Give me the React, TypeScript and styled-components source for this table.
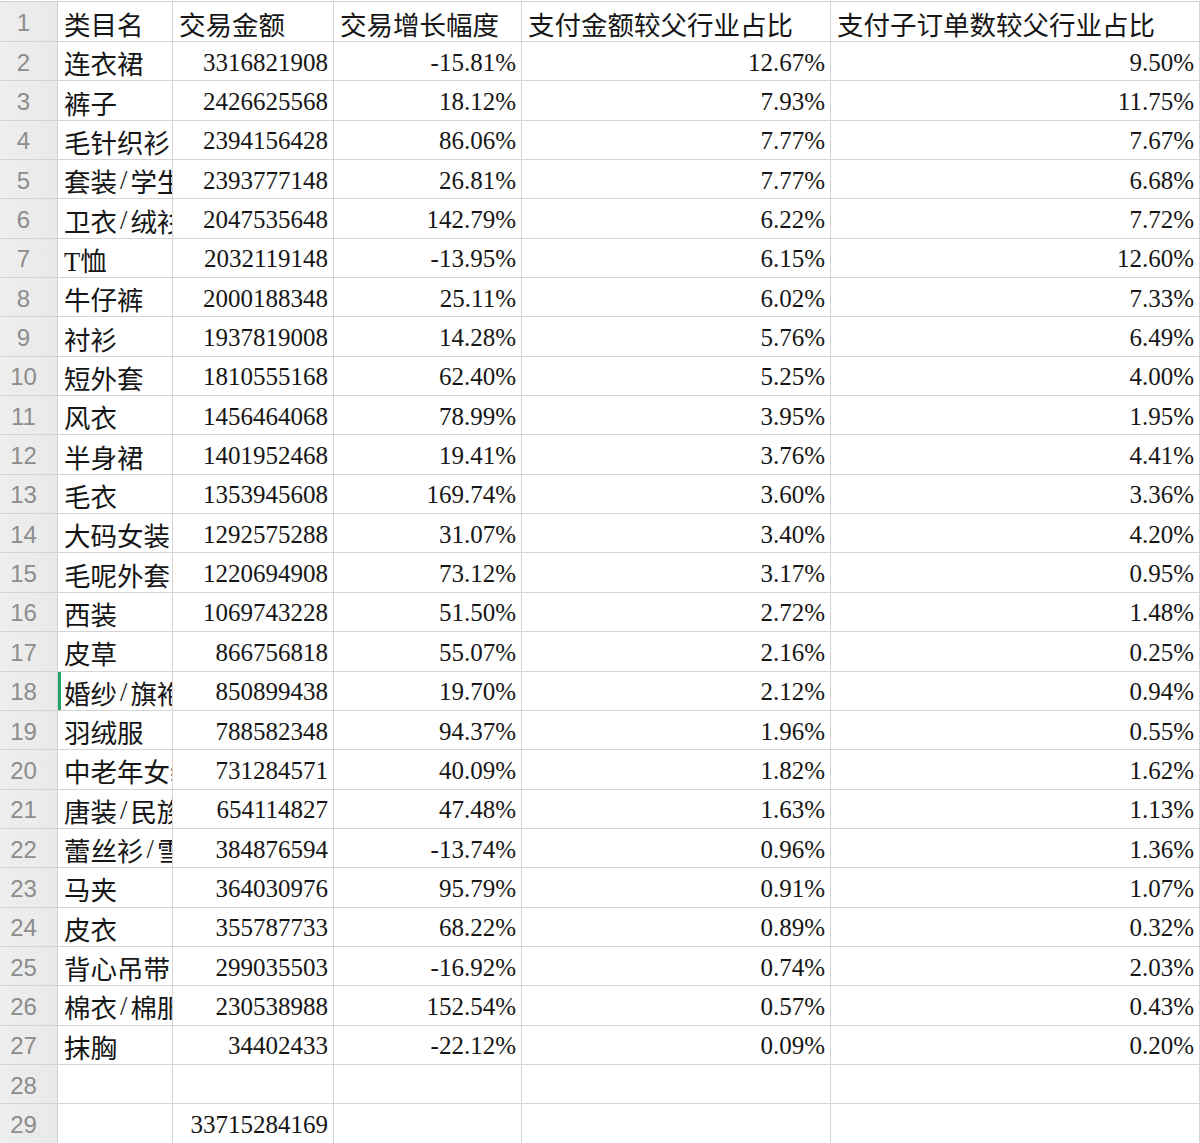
import React from 'react'
import styled, { createGlobalStyle, css } from 'styled-components'

const GlobalStyle = createGlobalStyle`
  html, body {
    margin: 0;
    padding: 0;
    background: #ffffff;
    overflow: hidden;
  }
`

const headers = ['类目名', '交易金额', '交易增长幅度', '支付金额较父行业占比', '支付子订单数较父行业占比']

const rows: [string, string, string, string, string][] = [
  ['连衣裙', '3316821908', '-15.81%', '12.67%', '9.50%'],
  ['裤子', '2426625568', '18.12%', '7.93%', '11.75%'],
  ['毛针织衫', '2394156428', '86.06%', '7.77%', '7.67%'],
  ['套装/学生校服', '2393777148', '26.81%', '7.77%', '6.68%'],
  ['卫衣/绒衫', '2047535648', '142.79%', '6.22%', '7.72%'],
  ['T恤', '2032119148', '-13.95%', '6.15%', '12.60%'],
  ['牛仔裤', '2000188348', '25.11%', '6.02%', '7.33%'],
  ['衬衫', '1937819008', '14.28%', '5.76%', '6.49%'],
  ['短外套', '1810555168', '62.40%', '5.25%', '4.00%'],
  ['风衣', '1456464068', '78.99%', '3.95%', '1.95%'],
  ['半身裙', '1401952468', '19.41%', '3.76%', '4.41%'],
  ['毛衣', '1353945608', '169.74%', '3.60%', '3.36%'],
  ['大码女装', '1292575288', '31.07%', '3.40%', '4.20%'],
  ['毛呢外套', '1220694908', '73.12%', '3.17%', '0.95%'],
  ['西装', '1069743228', '51.50%', '2.72%', '1.48%'],
  ['皮草', '866756818', '55.07%', '2.16%', '0.25%'],
  ['婚纱/旗袍/礼服', '850899438', '19.70%', '2.12%', '0.94%'],
  ['羽绒服', '788582348', '94.37%', '1.96%', '0.55%'],
  ['中老年女装', '731284571', '40.09%', '1.82%', '1.62%'],
  ['唐装/民族服装', '654114827', '47.48%', '1.63%', '1.13%'],
  ['蕾丝衫/雪纺衫', '384876594', '-13.74%', '0.96%', '1.36%'],
  ['马夹', '364030976', '95.79%', '0.91%', '1.07%'],
  ['皮衣', '355787733', '68.22%', '0.89%', '0.32%'],
  ['背心吊带', '299035503', '-16.92%', '0.74%', '2.03%'],
  ['棉衣/棉服', '230538988', '152.54%', '0.57%', '0.43%'],
  ['抹胸', '34402433', '-22.12%', '0.09%', '0.20%'],
]

const Sheet = styled.div`
  display: grid;
  grid-template-columns: 58px 115px 161px 188px 309px 369px;
  grid-template-rows: 40px repeat(28, 39.35px);
  border-top: 1px solid #d2d2d2;
  margin-top: 1px;
  width: 1200px;
  font-family: 'Liberation Serif', 'Noto Sans CJK SC', serif;
  color: #161616;
`

const RowNum = styled.div`
  display: flex;
  align-items: center;
  justify-content: center;
  padding: 3px 10px 0 0;
  background: linear-gradient(to right, #eeeeee, #e9e9e9);
  border-right: 1px solid #cfcfcf;
  border-bottom: 1px solid #d4d4d4;
  color: #8c8c8c;
  font-family: 'Liberation Sans', 'Noto Sans', sans-serif;
  font-size: 24px;
`

const Cell = styled.div<{ $num?: boolean; $active?: boolean }>`
  display: flex;
  align-items: center;
  justify-content: ${p => (p.$num ? 'flex-end' : 'flex-start')};
  padding: 3px ${p => (p.$num ? '5px' : '0')} 0 6px;
  font-size: ${p => (p.$num ? '25px' : '26.5px')};
  border-right: 1px solid #d4d4d4;
  border-bottom: 1px solid #d4d4d4;
  white-space: nowrap;
  overflow: hidden;
  ${p =>
    p.$active &&
    css`
      box-shadow: inset 3px 0 0 #22a464;
    `}
`

const Slash = styled.span`
  margin: 0 3px;
`

const Name: React.FC<{ text: string }> = ({ text }) => {
  const parts = text.split('/')
  return (
    <>
      {parts.map((p, i) => (
        <React.Fragment key={i}>
          {i > 0 && <Slash>/</Slash>}
          {p}
        </React.Fragment>
      ))}
    </>
  )
}

const App: React.FC = () => {
  return (
    <>
      <GlobalStyle />
      <Sheet>
        <RowNum>1</RowNum>
        {headers.map(h => (
          <Cell key={h}>{h}</Cell>
        ))}

        {rows.map((r, i) => (
          <React.Fragment key={r[0]}>
            <RowNum>{i + 2}</RowNum>
            <Cell $active={i + 2 === 18}>
              <Name text={r[0]} />
            </Cell>
            {r.slice(1).map((v, j) => (
              <Cell key={j} $num>
                {v}
              </Cell>
            ))}
          </React.Fragment>
        ))}

        <RowNum>28</RowNum>
        <Cell />
        <Cell $num />
        <Cell $num />
        <Cell $num />
        <Cell $num />

        <RowNum>29</RowNum>
        <Cell />
        <Cell $num>33715284169</Cell>
        <Cell $num />
        <Cell $num />
        <Cell $num />
      </Sheet>
    </>
  )
}

export default App
